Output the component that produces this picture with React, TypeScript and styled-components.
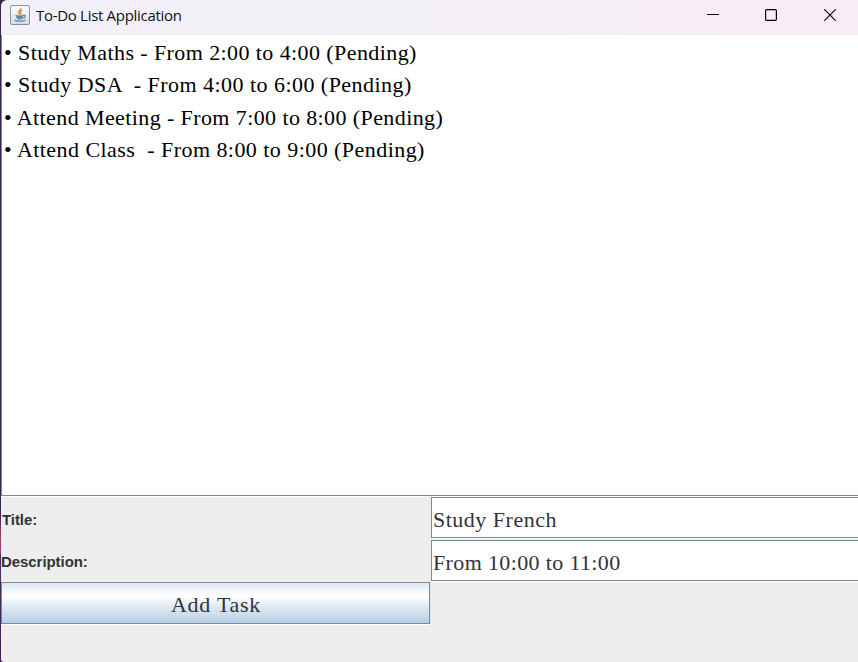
import React from "react";
import styled, { createGlobalStyle } from "styled-components";

const GlobalStyle = createGlobalStyle`
  html, body { margin: 0; padding: 0; overflow: hidden; background: #3b2460; }
  * { box-sizing: border-box; }
`;

const Window = styled.div`
  width: 858px;
  height: 662px;
  padding-left: 1px;
  display: flex;
  flex-direction: column;
  background: linear-gradient(180deg, #3a2257 0 500px, #4a2062 515px, #a03a68 535px, #a03a68 552px, #4f2a70 556px, #3f1f5e 662px);
`;

const TitleBar = styled.header`
  flex: 0 0 34px;
  display: flex;
  align-items: center;
  padding: 0 0 4px 9px;
  border-top-left-radius: 6px;
  border-bottom: 1px solid #eeeaf1;
  background: linear-gradient(90deg, #f2f0f8 0, #f4eff7 560px, #f8edf6 720px, #f8edf6 100%);
`;

const Caption = styled.h1`
  flex: 1;
  margin: 0 0 0 6px;
  font: 400 15px/20px "Open Sans", "Noto Sans", sans-serif;
  letter-spacing: -0.3px;
  color: #111;
  white-space: nowrap;
`;

const Controls = styled.div`
  display: flex;
  height: 30px;
`;

const Control = styled.button`
  width: 58px;
  height: 30px;
  padding: 0;
  border: 0;
  background: none;
  display: flex;
  align-items: center;
  justify-content: center;

  &:last-child {
    padding-left: 1px;
  }
`;

const TaskPane = styled.main`
  flex: 0 0 461px;
  padding: 2px 0 0 2px;
  background: #fff;
  border-left: 1px solid #7a8a99;
  border-bottom: 1px solid #7a8a99;
`;

const TaskList = styled.ul`
  margin: 0;
  padding: 0;
  list-style: none;
`;

const Task = styled.li<{ $spacing: number }>`
  height: 32.33px;
  font: 400 22px/32px "Liberation Serif", serif;
  letter-spacing: ${(p) => p.$spacing}px;
  white-space: pre;
  color: #000;
`;

const Form = styled.form`
  flex: 1;
  display: grid;
  grid-template-columns: 430px 1fr;
  grid-template-rows: 43px 42px 43px;
  border-top: 1px solid #fff;
  border-bottom-left-radius: 3px;
  background: #eee;
`;

const Label = styled.label<{ $indent?: number; $top: number }>`
  padding: ${(p) => p.$top}px 0 0 ${(p) => p.$indent ?? 0}px;
  font: 700 15px/41px "Liberation Sans", sans-serif;
  letter-spacing: -0.06px;
  color: #333;
`;

const Field = styled.div<{ $spacing: number }>`
  height: 41px;
  padding: 2px 0 0 1px;
  border: 1px solid #7a8a99;
  border-right: 0;
  background: #fff;
  box-shadow: 0 1px #fff;
  font: 400 22px/40px "Liberation Serif", serif;
  letter-spacing: ${(p) => p.$spacing}px;
  white-space: pre;
  color: #333;
`;

const AddButton = styled.button`
  width: 429px;
  height: 42px;
  padding: 3px 0 0 1px;
  border: 1px solid #7a8a99;
  border-radius: 0;
  background: linear-gradient(#dde8f3 0, #fff 30%, #fff 34%, #dce7f2 62%, #b8cfe5 100%);
  box-shadow: 0 1px #fff, 1px 0 #dce5ee;
  font: 400 22px/36px "Liberation Serif", serif;
  letter-spacing: 0.75px;
  color: #333;
`;

const tasks = [
  { text: "• Study Maths - From 2:00 to 4:00 (Pending)", spacing: 0.41 },
  { text: "• Study DSA  - From 4:00 to 6:00 (Pending)", spacing: 0.46 },
  { text: "• Attend Meeting - From 7:00 to 8:00 (Pending)", spacing: 0.4 },
  { text: "• Attend Class  - From 8:00 to 9:00 (Pending)", spacing: 0.45 },
];

const JavaIcon = () => (
  <svg width="20" height="20" viewBox="0 0 20 20">
    <defs>
      <linearGradient id="tile" x1="0" y1="0" x2="0" y2="1">
        <stop offset="0" stopColor="#fff" />
        <stop offset="1" stopColor="#d4dce1" />
      </linearGradient>
    </defs>
    <rect x=".5" y=".5" width="19" height="19" rx="1.5" fill="url(#tile)" stroke="#8297a5" />
    <path d="M10.7 3c1.2 1.8-3.4 2.8-2 4.8l1 1.8M12.2 5.2c-2 .8-2.6 1.5-1.6 2.5.6.8.2 1.5-.4 2" fill="none" stroke="#ee8b45" strokeWidth="1.5" />
    <path d="M5.5 10.4c2 .8 6 .8 8 0M6.2 11.8c2 .7 5 .7 6.8 0M7 13.3c1.6.6 3.8.6 5.2 0M13.5 10.4c2.6-.4 2.3 2.2-.4 2.6M4.5 15.2c2.5 1.3 8.5 1.2 10.8 0" fill="none" stroke="#6488a2" strokeWidth="1.3" />
  </svg>
);

export default function App() {
  return (
    <>
      <GlobalStyle />
      <Window>
        <TitleBar>
          <JavaIcon />
          <Caption>To-Do List Application</Caption>
          <Controls>
            <Control aria-label="Minimize">
              <svg width="12" height="12"><path d="M0 5.5h12" stroke="#000" /></svg>
            </Control>
            <Control aria-label="Maximize">
              <svg width="12" height="12"><rect x=".6" y=".6" width="10.8" height="10.8" rx="1.2" fill="none" stroke="#000" strokeWidth="1.2" /></svg>
            </Control>
            <Control aria-label="Close">
              <svg width="12" height="12"><path d="M.3.3l11.4 11.4M11.7.3L.3 11.7" stroke="#000" strokeWidth="1.1" /></svg>
            </Control>
          </Controls>
        </TitleBar>
        <TaskPane>
          <TaskList>
            {tasks.map((t) => (
              <Task key={t.text} $spacing={t.spacing}>{t.text}</Task>
            ))}
          </TaskList>
        </TaskPane>
        <Form>
          <Label $indent={1} $top={2}>Title:</Label>
          <Field $spacing={0.5}>Study French</Field>
          <Label $top={1}>Description:</Label>
          <Field $spacing={0.36}>From 10:00 to 11:00</Field>
          <AddButton type="button">Add Task</AddButton>
        </Form>
      </Window>
    </>
  );
}
